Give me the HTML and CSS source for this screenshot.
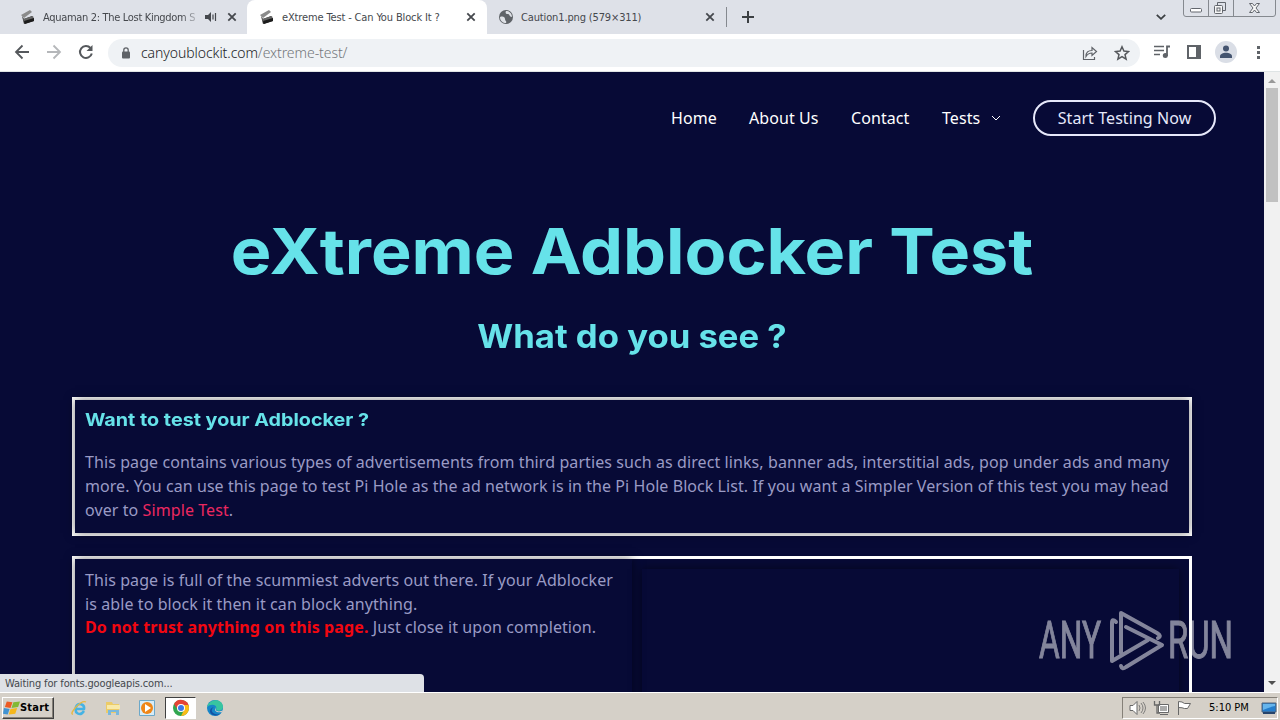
FILE: index.html
```html
<!DOCTYPE html>
<html lang="en">
<head>
    <meta charset="utf-8">
    <title>eXtreme Test - Can You Block It ?</title>
    <link rel="stylesheet" href="styles.css">
</head>
<body>
    <svg width="0" height="0" class="defs">
        <symbol id="clapper" viewBox="0 0 16 16">
            <path d="m1 6 9-5 2 2-8 6z" fill="#8b8b8b"/>
            <path d="m2 7 2 3 8-3 2 5-10 3z" fill="#333"/>
            <path d="m3 10 10-3 1 3-10 3z" fill="#666"/>
            <path d="m4 12 10-3v3L5 15z" fill="#1c1c1c"/>
        </symbol>
        <symbol id="close" viewBox="0 0 10 10">
            <path d="m1.3 1.3 7.4 7.4m0-7.4L1.3 8.7" stroke="#45484d" stroke-width="1.8"/>
        </symbol>
    </svg>

    <div class="tabs">
        <div class="tab first">
            <svg class="fav"><use href="#clapper"/></svg>
            <span class="tab-title fade">Aquaman 2: The Lost Kingdom S</span>
            <svg class="sound" viewBox="0 0 12 10"><path d="M0 3h3l3-3v10L3 7H0z" fill="#45484d"/><path d="M8 2.5v5M10.5 1v8" stroke="#45484d" stroke-width="1.2"/></svg>
            <svg class="close"><use href="#close"/></svg>
        </div>
        <div class="tab active">
            <svg class="fav"><use href="#clapper"/></svg>
            <span class="tab-title">eXtreme Test - Can You Block It ?</span>
            <svg class="close"><use href="#close"/></svg>
        </div>
        <div class="tab last">
            <svg class="fav" viewBox="0 0 16 16"><circle cx="8" cy="8" r="7" fill="#5f6368"/><path d="M2 8c3-1 5 0 5 2s2 2 1 4c-3 0-6-2-6-6zM8 2c-1 2 0 3 2 3s1 3 4 3c0-3-2-6-6-6z" fill="#dee1e6"/></svg>
            <span class="tab-title caution">Caution1.png (579×311)</span>
            <svg class="close"><use href="#close"/></svg>
        </div>
        <svg class="new-tab" viewBox="0 0 12 12"><path d="M6 0v12M0 6h12" stroke="#3c4043" stroke-width="2"/></svg>
        <svg class="tab-search" viewBox="0 0 10 6"><path d="m.8.8 4.2 4 4.2-4" fill="none" stroke="#3c4043" stroke-width="1.8"/></svg>
        <svg class="win-buttons" viewBox="0 0 93 17">
            <path d="M.5 0v14q0 2.5 2.5 2.5h87q2.5 0 2.5-2.5V0M25.5 0v16M50.5 0v16" fill="none" stroke="#85898f"/>
            <g fill="none" stroke="#62666d"><rect x="7.500" y="8.500" width="11" height="3.500" rx="1" fill="#fff"/><path d="M34.500 5V2.500h8v8H40"/><rect x="31.500" y="5.500" width="8" height="8" rx="1" fill="#f6f6f6"/><rect x="34" y="8" width="3" height="3"/><path d="M66.500 3.500h3l2 2.500 2-2.500h3l-3.500 4.500 3.500 4.500h-3l-2-2.500-2 2.500h-3L70 8z" fill="#f6f6f6"/></g>
        </svg>
    </div>

    <div class="toolbar">
        <svg class="nav-icons" viewBox="0 0 108 37" fill="none" stroke-width="1.8">
            <path d="M29 18H16m6.500-6.500L16 18l6.500 6.500" stroke="#55585c"/>
            <path d="M47 18h13m-6.500-6.500L60 18l-6.500 6.500" stroke="#b5b7ba"/>
            <path d="M90.500 14a6 6 0 1 0 1.300 5.500" stroke="#55585c" stroke-width="2"/>
            <path d="M92.500 11v6h-6z" fill="#55585c"/>
        </svg>
        <div class="address">
            <svg class="lock" viewBox="0 0 10 12"><rect x="1" y="4.500" width="8" height="7" rx="1" fill="#5f6368"/><path d="M2.800 5V3a2.200 2.200 0 0 1 4.400 0v2" fill="none" stroke="#5f6368" stroke-width="1.300"/></svg>
            <span class="url">canyoublockit.com<span>/extreme-test/</span></span>
            <svg class="share" viewBox="0 0 16 16" fill="none" stroke="#5f6368" stroke-width="1.200"><path d="M1.500 5v9.500h11V12M4 11.500c0-4 2-6 6-6V2.500l4.500 4-4.500 4v-2.500c-3 0-4.500 1-6 3.500z"/></svg>
            <svg class="star" viewBox="0 0 16 16"><path d="m8 1.800 1.900 4.300 4.600.4-3.500 3.100 1.100 4.600L8 11.700l-4.100 2.500L5 9.600 1.500 6.500l4.600-.4z" fill="none" stroke="#55585c" stroke-width="1.500"/></svg>
        </div>
        <svg class="tool-icons" viewBox="0 0 140 37">
            <path d="M14 12.500h10M14 16.500h10M14 20.500h6" stroke="#5f6368" stroke-width="1.600"/>
            <path d="M27 22v-9.500h3" fill="none" stroke="#5f6368" stroke-width="1.800"/><circle cx="25.300" cy="21.500" r="2.500" fill="#5f6368"/>
            <path d="M48 12h12v12H48z" fill="none" stroke="#5f6368" stroke-width="2"/><path d="M56 12h4v12h-4z" fill="#5f6368"/>
            <circle cx="86" cy="18" r="11" fill="#dadee6"/><circle cx="86" cy="14.500" r="3" fill="#44546f"/><path d="M80 24v-1.500c0-5 12-5 12 0V24z" fill="#44546f"/>
            <path d="M117 12h3v3h-3zm0 5h3v3h-3zm0 5h3v3h-3z" fill="#5f6368"/>
        </svg>
    </div>

    <div class="viewport">
        <main class="page">
            <header class="site-header">
                <a class="home">Home</a>
                <a class="about">About Us</a>
                <a class="contact">Contact</a>
                <a class="tests">Tests <svg class="arrow" viewBox="0 0 10 6"><path d="m1 1 4 4 4-4" fill="none" stroke="#fff"/></svg></a>
                <a class="button">Start Testing Now</a>
            </header>
            <h1>eXtreme Adblocker Test</h1>
            <h2>What do you see ?</h2>

            <section class="card intro">
                <div class="card-inner">
                    <h3>Want to test your Adblocker ?</h3>
                    <p>This page contains various types of advertisements from third parties such as direct links, banner ads, interstitial ads, pop under ads and many<br>
                    <span class="second-line">more. You can use this page to test Pi Hole as the ad network is in the Pi Hole Block List. If you want a Simpler Version of this test you may head</span><br>
                    over to <a>Simple Test</a>.</p>
                </div>
            </section>

            <section class="card columns">
                <div class="card-inner left-column">
                    <p>This page is full of the scummiest adverts out there. If your Adblocker<br>
                    is able to block it then it can block anything.</p>
                    <p class="warning"><strong>Do not trust anything on this page.</strong> Just close it upon completion.</p>
                </div>
                <div class="ad-space"></div>
            </section>
        </main>
        <div class="scrollbar">
            <svg viewBox="0 0 16 16"><path d="m4 11 4-4 4 4z" fill="#999"/></svg>
            <div class="thumb"></div>
            <svg class="down" viewBox="0 0 16 16"><path d="m4 5 4 4 4-4z" fill="#505050"/></svg>
        </div>
        <div class="status">Waiting for fonts.googleapis.com...</div>
        <svg class="watermark" viewBox="0 0 200 70">
            <g fill="#fff" stroke="#fff" stroke-width="1" font-family="Roboto, sans-serif" font-size="51">
                <text x="4" y="51" textLength="62" lengthAdjust="spacingAndGlyphs">ANY</text>
                <text x="133" y="51" textLength="65" lengthAdjust="spacingAndGlyphs">RUN</text>
            </g>
            <g fill="none" stroke="#fff" stroke-width="4" stroke-linejoin="round" stroke-linecap="round">
                <path d="M81 15q-4-4-4 1v38l36-21"/>
                <path d="M86 46V6l36 20q5 3 1 5M91 20l36 18-36 22q-4 3-5-1"/>
            </g>
        </svg>
    </div>

    <footer class="taskbar">
        <div class="start">
            <svg viewBox="0 0 18 16"><path d="m4 1 6 1-2 6-6-1z" fill="#ed5b24"/><path d="m11 2 7-1-2 6-7 1z" fill="#82b936"/><path d="m1 8 6 1-2 6-5-1z" fill="#4193d2"/><path d="m8 9 7-1-2 6-7 1z" fill="#f5b71c"/></svg>
            <span>Start</span>
        </div>
        <svg class="ie" viewBox="0 0 18 18"><path d="M14 12c-4 6-10 2-8-4 2-5 9-3 8 2H6" fill="none" stroke="#45b3e4" stroke-width="2.500"/><path d="M3 15c-5 1 8-15 13-12" fill="none" stroke="#e7b840" stroke-width="1.300"/></svg>
        <svg class="folder" viewBox="0 0 18 18"><path d="M2 3h6l1 2h6v9H2z" fill="#eccb67"/><path d="M3 6h13v4H3z" fill="#f8e9a9"/><path d="M4 16v-5h11v5h-3v-3H7v3z" fill="#7ab8dc"/></svg>
        <svg class="player" viewBox="0 0 18 18"><path d="M1.500 1.500h15v15h-15z" fill="#d7ecf7" stroke="#6ca8c9"/><circle cx="9" cy="9" r="6" fill="#ef8617"/><path d="m7 5 6 4-6 4z" fill="#fff"/></svg>
        <div class="task-active"><svg viewBox="0 0 18 18"><circle cx="9" cy="9" r="8" fill="#31a650"/><path d="M2 5a8 8 0 0 1 15 3H9L6 11z" fill="#e54335"/><path d="M9 6h7.400A8 8 0 0 1 9 17l3-6z" fill="#fabc16"/><circle cx="9" cy="9" r="4" fill="#fff"/><circle cx="9" cy="9" r="3" fill="#3b78e7"/></svg></div>
        <svg class="edge" viewBox="0 0 18 18"><circle cx="9" cy="9" r="8" fill="#1685c8"/><path d="M1 8C3-1 17-1 17 8c0 4-6 5-7 2 2-4-5-6-9-2z" fill="#38c5a0"/><path d="M8 8c-5 3-1 9 6 7-7 5-15-4-6-7z" fill="#1450a2"/><path d="M10 8c-2 4 3 6 7 3l-1 2c-5 1-9-1-6-5z" fill="#d5d0c8"/></svg>
        <div class="tray">
            <svg viewBox="0 0 60 18" class="tray-icons" fill="#fff" stroke="#686868">
                <path d="M2 6.500h3l4-4v13l-4-4H2z"/><path d="M11 6q2 3 0 6m2-8q4 5 0 10m2-11q5 6 0 12" fill="none" stroke-width=".8"/>
                <path d="M30.500 5.500h10v8h-10zM32 15.500h8"/><path d="M32 7h7v5h-7z" fill="#aaa" stroke="none"/><path d="M26.500 2v4h5V2M29 6v8h3" fill="none" stroke-width="1.300"/>
                <path d="M50.500 16V2.500q4 0 6 2h6l-3 5h-3q-2-1-6-1"/>
            </svg>
            <span>5:10 PM</span>
            <svg class="desktop" viewBox="0 0 16 14"><path d="M1 2h14v9H1z" fill="#247dcc" stroke="#52677c"/><path d="M2 3h12v2Q8 6 2 9z" fill="#66b5ec"/><path d="M2 11h12v2H2z" fill="#26446b"/></svg>
        </div>
    </footer>
</body>
</html>
```
FILE: styles.css
```css
* {
    box-sizing: border-box;
}

body {
    margin: 0;
    width: 1280px;
    height: 720px;
    display: flex;
    flex-direction: column;
    overflow: hidden;
    font-family: "Noto Sans", sans-serif;
}

svg {
    flex-shrink: 0;
}

.defs {
    position: absolute;
}

/* browser tabs */
.tabs {
    height: 34px;
    flex-shrink: 0;
    display: flex;
    align-items: center;
    background: #dee1e8;
    font: 11px "DejaVu Sans Condensed", "DejaVu Sans", sans-serif;
    font-stretch: condensed;
    color: #45484d;
}

.tab {
    height: 34px;
    display: flex;
    align-items: center;
    white-space: nowrap;
}

.first {
    width: 247px;
    padding-left: 20px;
}

.active {
    width: 240px;
    padding-left: 12px;
    background: #fff;
    border-radius: 8px 8px 0 0;
}

.last {
    width: 240px;
    padding-left: 11px;
    height: 20px;
    border-right: 1px solid #85898f;
}

.fav {
    width: 16px;
    height: 16px;
    margin-right: 7px;
}

.tab-title {
    width: 184px;
    letter-spacing: -0.14px;
}

.tab-title.fade {
    width: 154px;
    margin-right: 8px;
    letter-spacing: -0.32px;
    -webkit-mask-image: linear-gradient(to right, #000 90%, rgba(0, 0, 0, 0.2));
    mask-image: linear-gradient(to right, #000 90%, rgba(0, 0, 0, 0.2));
}

.sound {
    width: 12px;
    height: 10px;
    margin-right: 10px;
}

.close {
    width: 10px;
    height: 10px;
}

.new-tab {
    width: 12px;
    height: 12px;
    margin-left: 15px;
}

.tab-search {
    width: 10px;
    height: 6px;
    margin-left: auto;
}

.win-buttons {
    width: 93px;
    height: 17px;
    align-self: flex-start;
    margin: 0 4px 0 17px;
}

/* address bar */
.toolbar {
    height: 38px;
    flex-shrink: 0;
    display: flex;
    align-items: center;
    background: #fff;
    border-bottom: 1px solid #dfe4e5;
}

.nav-icons {
    width: 108px;
    height: 37px;
}

.address {
    width: 1032px;
    height: 28px;
    border-radius: 14px;
    background: #eff2f5;
    display: flex;
    align-items: center;
    padding: 0 10px 0 13px;
}

.lock {
    width: 10px;
    height: 12px;
    margin-right: 10px;
}

.url {
    font: 300 14px "Noto Sans", sans-serif;
    color: #202124;
    letter-spacing: -0.07px;
}

.url span {
    color: #74777b;
}

.share {
    width: 16px;
    height: 16px;
    margin-left: auto;
    margin-right: 16px;
}

.star {
    width: 16px;
    height: 16px;
}

.tool-icons {
    width: 140px;
    height: 37px;
}

/* page */
.viewport {
    position: relative;
    height: 620px;
    flex-shrink: 0;
    display: flex;
    overflow: hidden;
}

.page {
    width: 1264px;
    background: #070a36;
    color: #9a9bc5;
    font-size: 16px;
    line-height: 24px;
}

.site-header {
    height: 92px;
    padding-right: 48px;
    display: flex;
    justify-content: flex-end;
    align-items: center;
    color: #fff;
    white-space: nowrap;
}

.site-header a {
    margin-right: 32px;
    letter-spacing: 0.07px;
}

.home { width: 46px; }
.about { width: 70px; }
.contact { width: 59px; }

.tests {
    width: 59px;
    display: flex;
    align-items: center;
    justify-content: space-between;
}

.arrow {
    width: 10px;
    height: 6px;
}

.site-header .button {
    width: 183px;
    height: 36px;
    margin-right: 0;
    border: 2px solid #e6e8fa;
    border-radius: 18px;
    text-align: center;
    line-height: 33px;
    color: #e6e8fa;
}

h1,
h2,
h3 {
    font-family: Inter, sans-serif;
    color: #66e2e9;
    margin: 0;
    white-space: nowrap;
}

h1 {
    height: 90px;
    margin-top: 42px;
    text-align: center;
    font-size: 63px;
    line-height: 90px;
    transform: scaleX(1.083);
}

h2 {
    height: 44px;
    margin-top: 19px;
    text-align: center;
    font-size: 32px;
    line-height: 44px;
    transform: scaleX(1.083);
}

.card {
    width: 1120px;
    margin: 0 auto 20px;
    border: 3px solid #fff;
    white-space: nowrap;
}

.card-inner {
    padding: 10px;
    box-shadow: 0 0 10px rgba(0, 0, 0, 0.5);
}

.intro {
    height: 139px;
    margin-top: 38px;
}

.intro .card-inner {
    height: 133px;
}

h3 {
    width: 500px;
    font-size: 18px;
    line-height: 20px;
    margin-bottom: 20px;
    transform: scaleX(1.097);
    transform-origin: left;
}

p {
    margin: 0;
    letter-spacing: 0.088px;
}

.second-line {
    letter-spacing: 0.061px;
}

.intro a {
    color: #ec2860;
}

.columns {
    height: 200px;
    display: flex;
}

.left-column {
    width: 557px;
    padding-top: 9px;
}

.left-column .warning {
    line-height: 22px;
}

.ad-space {
    flex: 1;
    margin: 10px;
    box-shadow: 0 0 10px rgba(0, 0, 0, 0.5);
}

strong {
    color: #f20710;
    letter-spacing: 0.11px;
}

.scrollbar {
    width: 16px;
    background: #f1f1f1;
    display: flex;
    flex-direction: column;
}

.scrollbar svg {
    width: 16px;
    height: 16px;
}

.thumb {
    width: 12px;
    height: 114px;
    margin: 0 auto;
    background: #c1c1c1;
}

.scrollbar .down {
    margin-top: auto;
}

.status {
    position: absolute;
    left: 0;
    bottom: 0;
    width: 424px;
    height: 18px;
    padding-left: 5px;
    border-radius: 0 4px 0 0;
    background: #dee1e6;
    color: #45484d;
    font: 11px/19px "DejaVu Sans Condensed", "DejaVu Sans", sans-serif;
    font-stretch: condensed;
    letter-spacing: -0.14px;
}

.watermark {
    position: absolute;
    left: 1035px;
    top: 535px;
    width: 200px;
    height: 70px;
    overflow: visible;
    opacity: 0.5;
}

/* taskbar */
.taskbar {
    height: 28px;
    flex-shrink: 0;
    display: flex;
    align-items: center;
    padding: 2px 2px 0;
    background: #d5d0c8;
    border-top: 1px solid #fff;
    font: 11px "DejaVu Sans Condensed", "DejaVu Sans", sans-serif;
    font-stretch: condensed;
    color: #000;
}

.start {
    width: 52px;
    height: 22px;
    display: flex;
    align-items: center;
    border: 1px solid #fff;
    border-right-color: #404040;
    border-bottom-color: #404040;
    box-shadow: inset -1px -1px #858078;
    font-weight: bold;
    letter-spacing: 0.2px;
}

.start svg {
    width: 17px;
    height: 16px;
}

.ie,
.folder,
.player,
.edge,
.task-active svg {
    width: 18px;
    height: 18px;
}

.ie { margin-left: 16px; }
.folder { margin-left: 16px; }
.player { margin-left: 16px; }

.task-active {
    width: 31px;
    height: 22px;
    display: flex;
    align-items: center;
    justify-content: center;
    margin: 0 10px 0 9px;
    background: #fff;
    border: 1px solid #404040;
    border-right-color: #fff;
    border-bottom-color: #fff;
}

.tray {
    width: 156px;
    height: 22px;
    margin-left: auto;
    display: flex;
    align-items: center;
    border: 1px solid #858078;
    border-right-color: #fff;
    border-bottom-color: #fff;
}

.tray-icons {
    width: 60px;
    height: 18px;
    margin: 0 21px 0 5px;
    overflow: visible;
}

.tray span {
    width: 52px;
    white-space: nowrap;
}

.desktop {
    width: 16px;
    height: 14px;
}
```
